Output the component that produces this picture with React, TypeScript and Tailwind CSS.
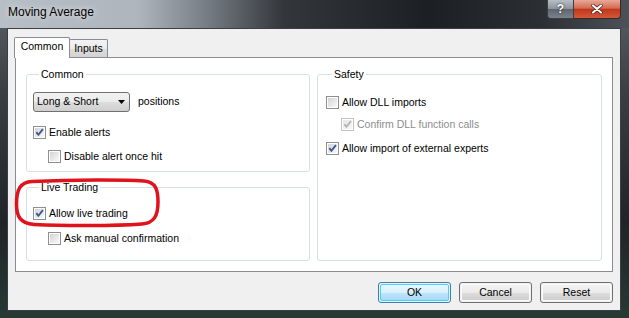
import React from "react";

function CheckBox({ checked, disabled }: { checked?: boolean; disabled?: boolean }) {
  return (
    <span
      className={
        disabled
          ? "w-[13px] h-[13px] border border-[#c2c2c2] bg-white p-[1px] flex shrink-0"
          : "w-[13px] h-[13px] border border-[#8e8f8f] bg-white p-[1px] flex shrink-0"
      }
    >
      <span
        className={
          disabled
            ? "flex-1 flex bg-[linear-gradient(135deg,#e6e6e6,#f8f8f8)]"
            : "flex-1 flex bg-[linear-gradient(135deg,#d4d4d4,#f9f9f9)]"
        }
      >
        {checked && (
          <svg width="9" height="9" viewBox="0 0 9 9" className="block">
            <path
              d="M1.3 4.2 L3.4 6.8 L7.9 1.2"
              fill="none"
              stroke={disabled ? "#b4b4b4" : "#3f5797"}
              strokeWidth="1.9"
            />
          </svg>
        )}
      </span>
    </span>
  );
}

function Row({
  label,
  checked,
  disabled,
  className,
}: {
  label: string;
  checked?: boolean;
  disabled?: boolean;
  className: string;
}) {
  return (
    <div className={"flex items-center h-[13px] gap-[3px] " + className}>
      <CheckBox checked={checked} disabled={disabled} />
      <span className={disabled ? "text-[#8d8d8d] leading-[13px]" : "text-black leading-[13px]"}>
        {label}
      </span>
    </div>
  );
}

function Group({
  title,
  className,
  children,
}: {
  title: string;
  className: string;
  children: React.ReactNode;
}) {
  return (
    <div className={"border border-[#d5dfe5] rounded-[3px] flex flex-col " + className}>
      <span className="-mt-[7px] ml-[6px] px-[2px] bg-white w-fit leading-[13px] text-black">
        {title}
      </span>
      {children}
    </div>
  );
}

function Btn({ label, def }: { label: string; def?: boolean }) {
  return (
    <div
      className={
        def
          ? "w-[73px] h-[21px] rounded-[3px] border border-[#3c7fb1] p-px flex"
          : "w-[73px] h-[21px] rounded-[3px] border border-[#707070] p-px flex"
      }
    >
      <div
        className={
          def
            ? "flex-1 rounded-[2px] border border-[#48d1f8] bg-[linear-gradient(180deg,#eaf6fd_0%,#d9f0fc_50%,#bee6fd_51%,#a7d9f5_100%)] flex items-center justify-center text-black"
            : "flex-1 rounded-[2px] border border-[#fbfbfb] bg-[linear-gradient(180deg,#f2f2f2_0%,#ebebeb_50%,#dddddd_51%,#cfcfcf_100%)] flex items-center justify-center text-black"
        }
      >
        {label}
      </div>
    </div>
  );
}

export default function App() {
  return (
    <div className="w-[629px] h-[318px] relative overflow-hidden flex flex-col pl-[7px] pr-[8px] pb-[7px] bg-[linear-gradient(180deg,#5b6066_0%,#3a3e43_30%,#202428_70%,#263a33_100%)] font-['Liberation_Sans',Arial,sans-serif] text-[10.5px]">
      {/* Title bar */}
      <div className="h-[28px] shrink-0 -ml-[7px] -mr-[8px] pl-[8px] pr-[8px] flex bg-[linear-gradient(90deg,#b7bec5_0%,#aeb5bc_22%,#767c83_33%,#33373c_45%,#1c1f23_68%,#2b2f34_86%,#4d5258_100%)]">
        <div className="flex-1 h-[24px] flex items-center">
          <span className="text-[12px] text-black [text-shadow:0_0_6px_rgba(255,255,255,0.9)]">
            Moving Average
          </span>
        </div>
        <div className="flex self-start">
          <div className="w-[27px] h-[19px] rounded-bl-[4px] border border-t-0 border-[#3a3f46] bg-[linear-gradient(180deg,#b8bec6_0%,#8d949c_48%,#5f666f_52%,#7a828b_100%)] flex items-center justify-center">
            <span className="text-white font-bold text-[12px] leading-none [text-shadow:0_0_2px_#000]">?</span>
          </div>
          <div className="w-[47px] h-[19px] rounded-br-[4px] border border-t-0 border-l-0 border-[#3a2a26] bg-[linear-gradient(180deg,#e8a898_0%,#d46c52_45%,#c0381c_52%,#d4583a_100%)] flex items-center justify-center">
            <svg width="12" height="10" viewBox="0 0 12 10">
              <path d="M2 1.5 L10 8.5 M10 1.5 L2 8.5" stroke="#3b1a12" strokeWidth="3.4" strokeLinecap="round" />
              <path d="M2 1.5 L10 8.5 M10 1.5 L2 8.5" stroke="#ffffff" strokeWidth="2.2" strokeLinecap="round" />
            </svg>
          </div>
        </div>
      </div>

      {/* Client area */}
      <div className="h-[283px] border border-[#3b3f44] bg-[#f0f0f0] flex flex-col pt-[8px]">
        {/* tabs */}
        <div className="h-[20px] flex items-end pl-[6px] shrink-0">
          <div className="relative z-10 w-[56px] h-[21px] -mb-px bg-white border border-b-0 border-[#898c95] rounded-t-[2px] flex items-center justify-center pb-[2px] text-black">
            Common
          </div>
          <div className="w-[39px] h-[18px] -ml-px border border-b-0 border-[#898c95] rounded-t-[2px] bg-[linear-gradient(180deg,#f3f3f3_0%,#ebebeb_50%,#dddddd_51%,#d3d3d3_100%)] flex items-center justify-center text-black">
            Inputs
          </div>
        </div>
        {/* panel */}
        <div className="mx-[7px] h-[215px] border border-[#898c95] bg-white flex gap-[7px] pt-[16px] px-[10px]">
          <div className="w-[284px] flex flex-col gap-[15px]">
            <Group title="Common" className="h-[98px] pl-[6px]">
              <div className="flex items-center mt-[11px]">
                <div className="w-[97px] h-[20px] rounded-[3px] border border-[#707070] bg-[linear-gradient(180deg,#f2f2f2_0%,#ebebeb_50%,#dddddd_51%,#cfcfcf_100%)] flex items-center pl-[3px] pr-[4px] text-black">
                  <span className="flex-1">Long &amp; Short</span>
                  <svg width="7" height="4" viewBox="0 0 7 4">
                    <path d="M0 0 L7 0 L3.5 4 Z" fill="#000" />
                  </svg>
                </div>
                <span className="ml-[8px] text-black">positions</span>
              </div>
              <Row label="Enable alerts" checked className="mt-[14px]" />
              <Row label="Disable alert once hit" className="mt-[11px] ml-[15px]" />
            </Group>
            <Group title="Live Trading" className="h-[74px] pl-[6px]">
              <Row label="Allow live trading" checked className="mt-[13px]" />
              <Row label="Ask manual confirmation" className="mt-[12px] ml-[15px]" />
            </Group>
          </div>
          <Group title="Safety" className="w-[285px] h-[187px] pl-[8px]">
            <Row label="Allow DLL imports" className="mt-[15px]" />
            <Row label="Confirm DLL function calls" checked disabled className="mt-[9px] ml-[15px]" />
            <Row label="Allow import of external experts" checked className="mt-[11px]" />
          </Group>
        </div>
        {/* buttons */}
        <div className="mt-[10px] mr-[7px] flex justify-end gap-[8px]">
          <Btn label="OK" def />
          <Btn label="Cancel" />
          <Btn label="Reset" />
        </div>
      </div>

      {/* red annotation */}
      <svg
        className="absolute left-[14px] top-[178px] pointer-events-none"
        width="146"
        height="50"
        viewBox="0 0 146 50"
      >
        <path
          d="M18 3.5 C60 1.5 110 1.5 130 3 C142 4 144 12 144 24 C144 38 140 45 128 46 C100 48 50 48 20 46.5 C6 45.5 2.5 38 2.5 26 C2.5 12 6 4 18 3.5 Z"
          fill="none"
          stroke="#e0121c"
          strokeWidth="3.5"
        />
      </svg>
    </div>
  );
}
